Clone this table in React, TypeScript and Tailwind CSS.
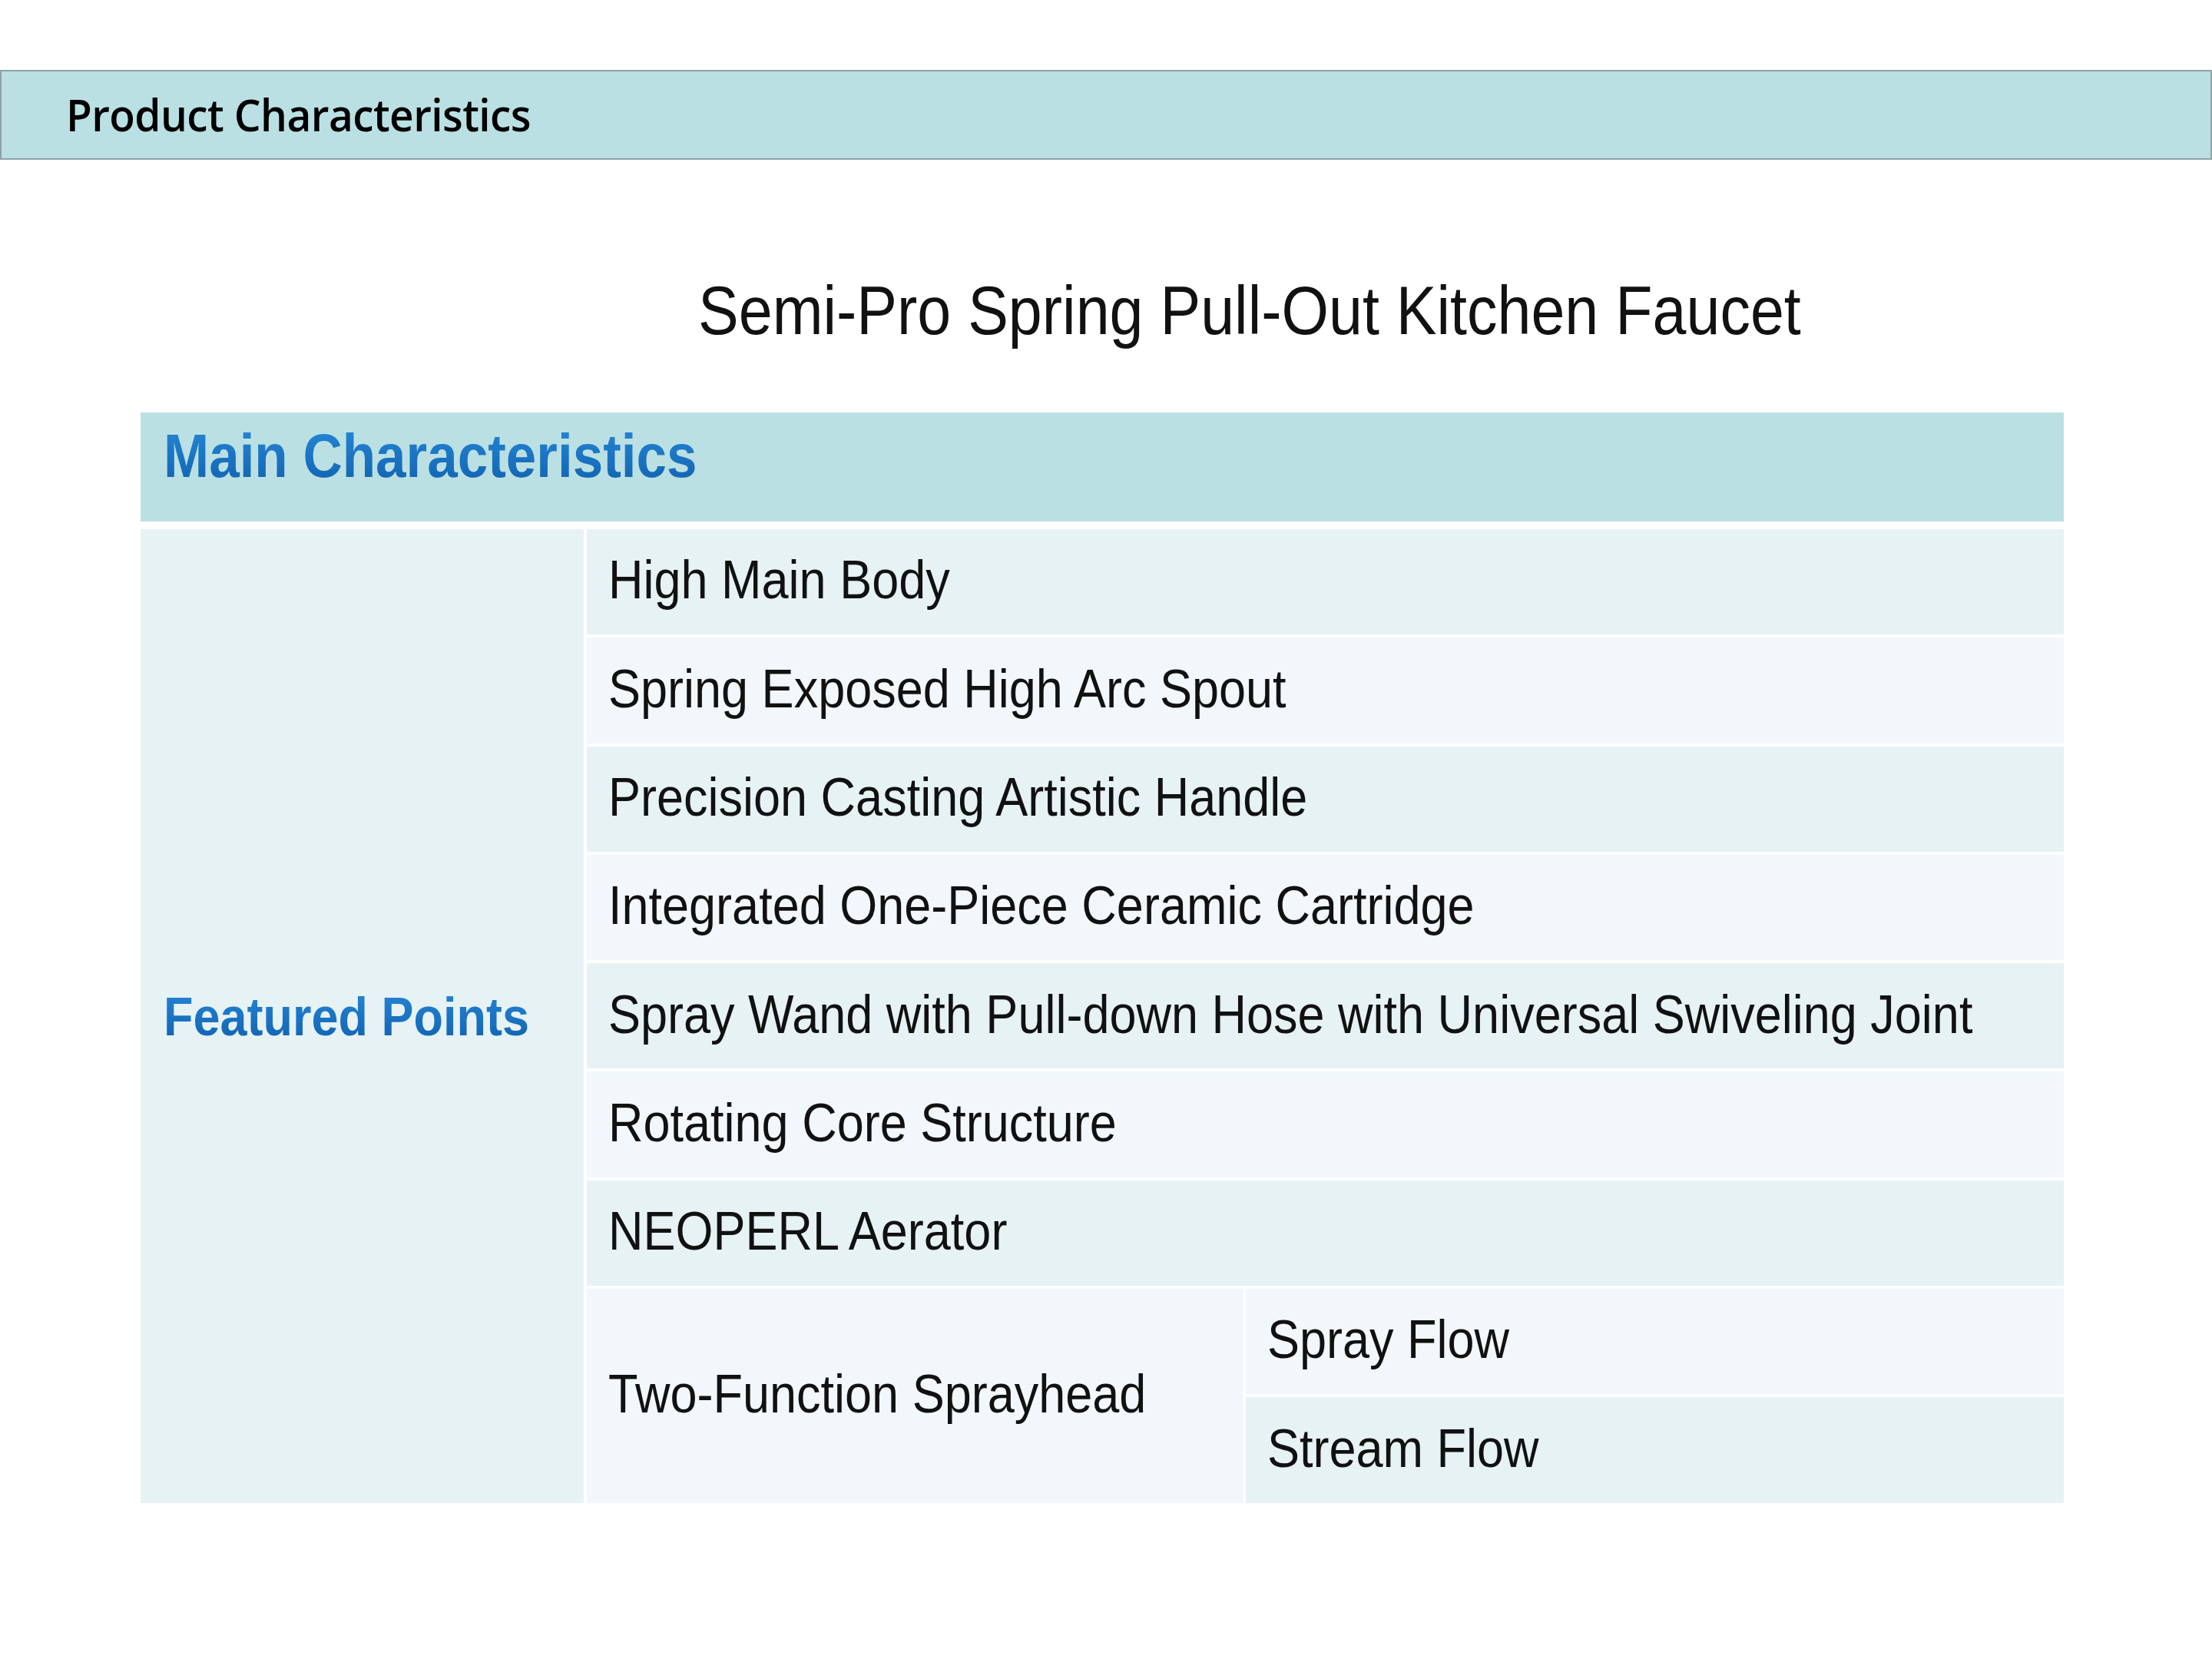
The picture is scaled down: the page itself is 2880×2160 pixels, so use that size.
const rows = [
  "High Main Body",
  "Spring Exposed High Arc Spout",
  "Precision Casting Artistic Handle",
  "Integrated One-Piece Ceramic Cartridge",
  "Spray Wand with Pull-down Hose with Universal Swiveling Joint",
  "Rotating Core Structure",
  "NEOPERL Aerator",
];

const dark = "bg-[#e6f2f4]";
const light = "bg-[#f1f7fa]";

const stretch = "inline-block scale-y-[1.12]";

const Cell = ({ text, className }: { text: string; className: string }) => (
  <div className={`flex items-center pb-[6px] pl-[28px] text-[63px] text-[#111111] ${className}`}>
    <span className={stretch}>{text}</span>
  </div>
);

const App = () => {
  return (
    <div className="min-h-[2160px] w-[2880px] bg-white pt-[91px] font-['Liberation_Sans',Arial,sans-serif]">
      <div className="flex h-[117px] items-center border-2 border-[#8fa2a6] bg-[#bbe0e3] pl-[84px]">
        <span className="inline-block scale-y-[1.05] font-['Open_Sans',sans-serif] text-[55px] font-semibold tracking-[-0.6px] text-black">
          Product Characteristics
        </span>
      </div>

      <h1 className="mt-[151px] pl-[909px] text-[79px] leading-[91px] text-[#111111]">
        <span className={stretch}>Semi-Pro Spring Pull-Out Kitchen Faucet</span>
      </h1>

      <div className="ml-[183px] mt-[87px] w-[2504px]">
        <div className="mb-[10px] flex h-[142px] items-start bg-[#bbe0e3] pl-[30px] pt-[4px]">
          <span className="inline-block scale-y-[1.12] bg-gradient-to-b from-[#2a8fe0] to-[#0b5aa6] bg-clip-text text-[71px] font-bold text-transparent">
            Main Characteristics
          </span>
        </div>

        <div className="grid grid-cols-[577px_854px_1065px] grid-rows-[repeat(9,137.3px)] gap-[4px]">
          <div className={`row-span-9 flex items-center pl-[30px] ${dark}`}>
            <span className="inline-block scale-y-[1.12] bg-gradient-to-b from-[#2a8fe0] to-[#0b5aa6] bg-clip-text text-[63px] font-bold text-transparent">
              Featured Points
            </span>
          </div>
          {rows.map((r, i) => (
            <Cell key={r} text={r} className={`col-span-2 ${i % 2 === 0 ? dark : light}`} />
          ))}
          <Cell text="Two-Function Sprayhead" className={`row-span-2 ${light}`} />
          <Cell text="Spray Flow" className={light} />
          <Cell text="Stream Flow" className={dark} />
        </div>
      </div>
    </div>
  );
};

export default App;
